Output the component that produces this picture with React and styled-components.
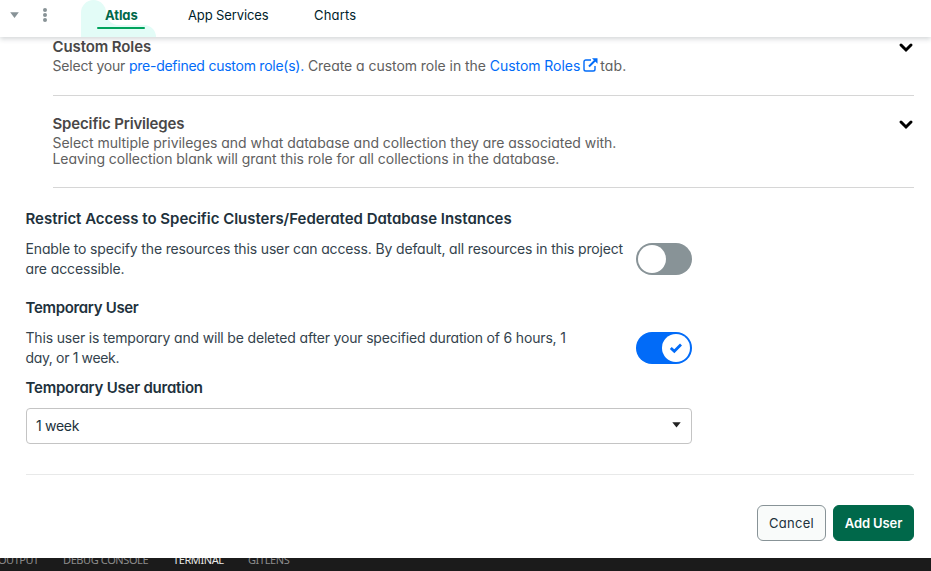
import React from "react";
import styled, { createGlobalStyle } from "styled-components";

const GlobalStyle = createGlobalStyle`
  * { box-sizing: border-box; }
  body {
    margin: 0;
    overflow: hidden;
    background: #fff;
    color: #21313c;
    font-family: Inter, "Liberation Sans", sans-serif;
    font-feature-settings: "cv11" 1;
    font-size: 14px;
  }
`;

const Page = styled.div`
  width: 931px;
  height: 571px;
  display: flex;
  flex-direction: column;
  overflow: hidden;
`;

const NavBar = styled.nav`
  flex: none;
  position: relative;
  z-index: 1;
  height: 37px;
  display: flex;
  align-items: flex-start;
  background: #fff;
  box-shadow: 0 2px 5px 0 rgba(33, 49, 60, 0.2);
`;

const NavIcons = styled.div`
  width: 81px;
  height: 30px;
  display: flex;
  align-items: center;
  gap: 24px;
  padding-left: 10px;
  svg { display: block; }
`;

const NavTab = styled.a`
  height: 37px;
  width: ${(p) => p.$width}px;
  padding-top: 5px;
  font-size: 13px;
  line-height: 20px;
  color: #001e2b;
  white-space: nowrap;
  letter-spacing: ${(p) => p.$spacing}px;
`;

const ActiveTab = styled(NavTab)`
  position: relative;
  padding-left: 24px;
  font-weight: 700;
  color: #00684a;
`;

const TabBlob = styled.svg`
  position: absolute;
  left: 0;
  top: 0;
`;

const TabLabel = styled.span`
  position: relative;
`;

const Content = styled.main`
  flex: none;
  height: 521px;
  padding: 0 17px 0 26px;
  display: flex;
  flex-direction: column;
`;

const RoleSection = styled.section`
  flex: none;
  height: ${(p) => p.$height}px;
  margin-left: 27px;
  padding-top: ${(p) => p.$top}px;
  display: flex;
  justify-content: space-between;
  border-bottom: 1px solid #d6d6d6;
  color: #494747;
`;

const RoleCopy = styled.div`
  margin-left: -0.5px;
`;

const RoleTitle = styled.h3`
  margin: 0 0 2px;
  font-size: 15px;
  font-weight: 600;
  line-height: 19px;
  letter-spacing: ${(p) => p.$spacing}px;
`;

const RoleText = styled.p`
  margin: 0;
  line-height: 16px;
  white-space: nowrap;
  color: #606060;
`;

const Tracked = styled.span`
  letter-spacing: ${(p) => p.$spacing}px;
`;

const Link = styled.a`
  color: #016bf8;
  letter-spacing: ${(p) => p.$spacing}px;
  svg { vertical-align: -1px; margin: 0 -1.5px 0 2.5px; }
`;

const ChevronIcon = styled.svg`
  flex: none;
  margin-top: 5px;
`;

const Settings = styled.div`
  flex: none;
  width: 666px;
  padding-top: 21px;
`;

const Setting = styled.section`
  height: ${(p) => p.$height}px;
`;

const SettingTitle = styled.h3`
  margin: 0 0 10px -0.5px;
  font-size: 15px;
  font-weight: 600;
  line-height: 20px;
  white-space: nowrap;
  letter-spacing: ${(p) => p.$spacing}px;
`;

const SettingRow = styled.div`
  display: flex;
  justify-content: space-between;
  align-items: flex-start;
`;

const SettingText = styled.p`
  margin: 0 0 0 -0.5px;
  line-height: 20px;
  white-space: nowrap;
  color: #34434d;
`;

const Toggle = styled.button`
  flex: none;
  width: 56px;
  height: 32px;
  margin: 4px 0 0;
  padding: 2px;
  border: 0;
  border-radius: 16px;
  display: flex;
  justify-content: ${(p) => (p.$on ? "flex-end" : "flex-start")};
  background: ${(p) => (p.$on ? "#016bf8" : "#889397")};
`;

const Knob = styled.span`
  width: 28px;
  height: 28px;
  border-radius: 50%;
  display: flex;
  align-items: center;
  justify-content: center;
  background: #fff;
`;

const SelectBox = styled.div`
  width: 666px;
  height: 36px;
  padding: 0 10px 2px 9px;
  display: flex;
  align-items: center;
  justify-content: space-between;
  border: 1px solid #c4c4c4;
  border-radius: 4px;
  letter-spacing: -0.3px;
`;

const Footer = styled.footer`
  flex: none;
  margin-top: 30px;
  padding-top: 30px;
  display: flex;
  justify-content: flex-end;
  gap: 7px;
  border-top: 1px solid #e8e9e9;
`;

const Button = styled.button`
  width: ${(p) => p.$width}px;
  height: 36px;
  padding: 0;
  border: 1px solid ${(p) => (p.$primary ? "#00684a" : "#889397")};
  border-radius: 6px;
  background: ${(p) => (p.$primary ? "#00684a" : "#f9fbfa")};
  color: ${(p) => (p.$primary ? "#fff" : "#21313c")};
  font: ${(p) => (p.$primary ? 600 : 400)} 13px/20px Inter, sans-serif;
  font-feature-settings: "cv11" 1;
  letter-spacing: ${(p) => (p.$primary ? -0.1 : 0.25)}px;
`;

const PanelBar = styled.div`
  flex: none;
  height: 13px;
  display: flex;
  overflow: hidden;
  background: #1b1b1b;
`;

const PanelTab = styled.span`
  flex: none;
  width: ${(p) => p.$width}px;
  margin-left: ${(p) => p.$offset || 0}px;
  margin-top: -6px;
  font: 11px/15px "Noto Sans", sans-serif;
  white-space: nowrap;
  letter-spacing: ${(p) => p.$spacing}px;
  color: ${(p) => (p.$active ? "#e7e7e7" : "#8b8b8b")};
`;

const Chevron = () => (
  <ChevronIcon width="16" height="12" viewBox="0 0 16 12">
    <path d="M3 3 8 8 13 3" fill="none" stroke="#000" strokeWidth="3" strokeLinecap="round" />
  </ChevronIcon>
);

export default function App() {
  return (
    <>
      <GlobalStyle />
      <Page>
        <NavBar>
          <NavIcons>
            <svg width="9" height="6" viewBox="0 0 9 6">
              <path d="M.2.2h8.600L4.500 5.900z" fill="#889397" />
            </svg>
            <svg width="4" height="14" viewBox="0 0 4 14" fill="#889397">
              <circle cx="2" cy="2" r="2" />
              <circle cx="2" cy="7" r="2" />
              <circle cx="2" cy="12" r="2" />
            </svg>
          </NavIcons>
          <ActiveTab $width={107} $spacing={-0.1}>
            <TabBlob width="76" height="37" viewBox="0 0 76 37">
              <path d="M0 37V12.500a12.500 12.500 0 0 1 25 0A12.500 12.500 0 0 0 37.500 25H63a12 12 0 0 1 12 12z" fill="#e3fcf7" />
              <rect x="16" y="27" width="48" height="2" rx="1" fill="#00a35c" />
            </TabBlob>
            <TabLabel>Atlas</TabLabel>
          </ActiveTab>
          <NavTab $width={126} $spacing={-0.12}>App Services</NavTab>
          <NavTab $width={60} $spacing={0.2}>Charts</NavTab>
        </NavBar>

        <Content>
          <RoleSection $height={59} $top={0}>
            <RoleCopy>
              <RoleTitle $spacing={-0.1}>Custom Roles</RoleTitle>
              <RoleText>
                <Tracked $spacing={-0.19}>Select your </Tracked>
                <Link $spacing={-0.25}>pre-defined custom role(s).</Link>{" "}
                <Tracked $spacing={-0.05}>Create a custom role in the </Tracked>
                <Link $spacing={-0.05}>
                  Custom Roles
                  <svg width="15" height="14" viewBox="0 0 15 14" fill="none" stroke="#016bf8">
                    <path d="M8 2H2.800A1.800 1.800 0 0 0 1 3.800v7.400A1.800 1.800 0 0 0 2.800 13h7.400a1.800 1.800 0 0 0 1.800-1.800V8" strokeWidth="1.400" />
                    <path d="M6 8.500 12 2.500" strokeWidth="2" />
                    <path d="M9 .3h5.500v5.500z" fill="#016bf8" stroke="none" />
                  </svg>
                </Link>
                <Tracked $spacing={0.1}> tab.</Tracked>
              </RoleText>
            </RoleCopy>
            <Chevron />
          </RoleSection>

          <RoleSection $height={92} $top={18}>
            <RoleCopy>
              <RoleTitle $spacing={-0.15}>Specific Privileges</RoleTitle>
              <RoleText>
                <Tracked $spacing={-0.035}>
                  Select multiple privileges and what database and collection they are associated with.
                </Tracked>
                <br />
                <Tracked $spacing={-0.045}>
                  Leaving collection blank will grant this role for all collections in the database.
                </Tracked>
              </RoleText>
            </RoleCopy>
            <Chevron />
          </RoleSection>

          <Settings>
            <Setting $height={89}>
              <SettingTitle $spacing={-0.02}>
                Restrict Access to Specific Clusters/Federated Database Instances
              </SettingTitle>
              <SettingRow>
                <SettingText>
                  <Tracked $spacing={-0.153}>
                    Enable to specify the resources this user can access. By default, all resources in this project
                  </Tracked>
                  <br />
                  <Tracked $spacing={-0.12}>are accessible.</Tracked>
                </SettingText>
                <Toggle role="switch" aria-checked="false"><Knob /></Toggle>
              </SettingRow>
            </Setting>

            <Setting $height={80}>
              <SettingTitle $spacing={-0.32}>Temporary User</SettingTitle>
              <SettingRow>
                <SettingText>
                  <Tracked $spacing={-0.175}>
                    This user is temporary and will be deleted after your specified duration of 6 hours, 1
                  </Tracked>
                  <br />
                  <Tracked $spacing={-0.35}>day, or 1 week.</Tracked>
                </SettingText>
                <Toggle role="switch" aria-checked="true" $on>
                  <Knob>
                    <svg width="14" height="12" viewBox="0 0 14 12">
                      <path d="M1.800 6 5.300 9.300 12 2.600" fill="none" stroke="#016bf8" strokeWidth="2.800" />
                    </svg>
                  </Knob>
                </Toggle>
              </SettingRow>
            </Setting>

            <Setting $height={66}>
              <SettingTitle $spacing={-0.22}>Temporary User duration</SettingTitle>
              <SelectBox>
                1 week
                <svg width="9" height="6" viewBox="0 0 9 6">
                  <path d="M.3.300h8.400L4.500 5.600z" fill="#222" />
                </svg>
              </SelectBox>
            </Setting>
          </Settings>

          <Footer>
            <Button $width={69}>Cancel</Button>
            <Button $width={81} $primary>Add User</Button>
          </Footer>
        </Content>

        <PanelBar>
          <PanelTab $width={65} $offset={-2} $spacing={-0.5}>OUTPUT</PanelTab>
          <PanelTab $width={110} $spacing={-0.4}>DEBUG CONSOLE</PanelTab>
          <PanelTab $width={75} $spacing={-0.4} $active>TERMINAL</PanelTab>
          <PanelTab $width={60} $spacing={-0.4}>GITLENS</PanelTab>
        </PanelBar>
      </Page>
    </>
  );
}
